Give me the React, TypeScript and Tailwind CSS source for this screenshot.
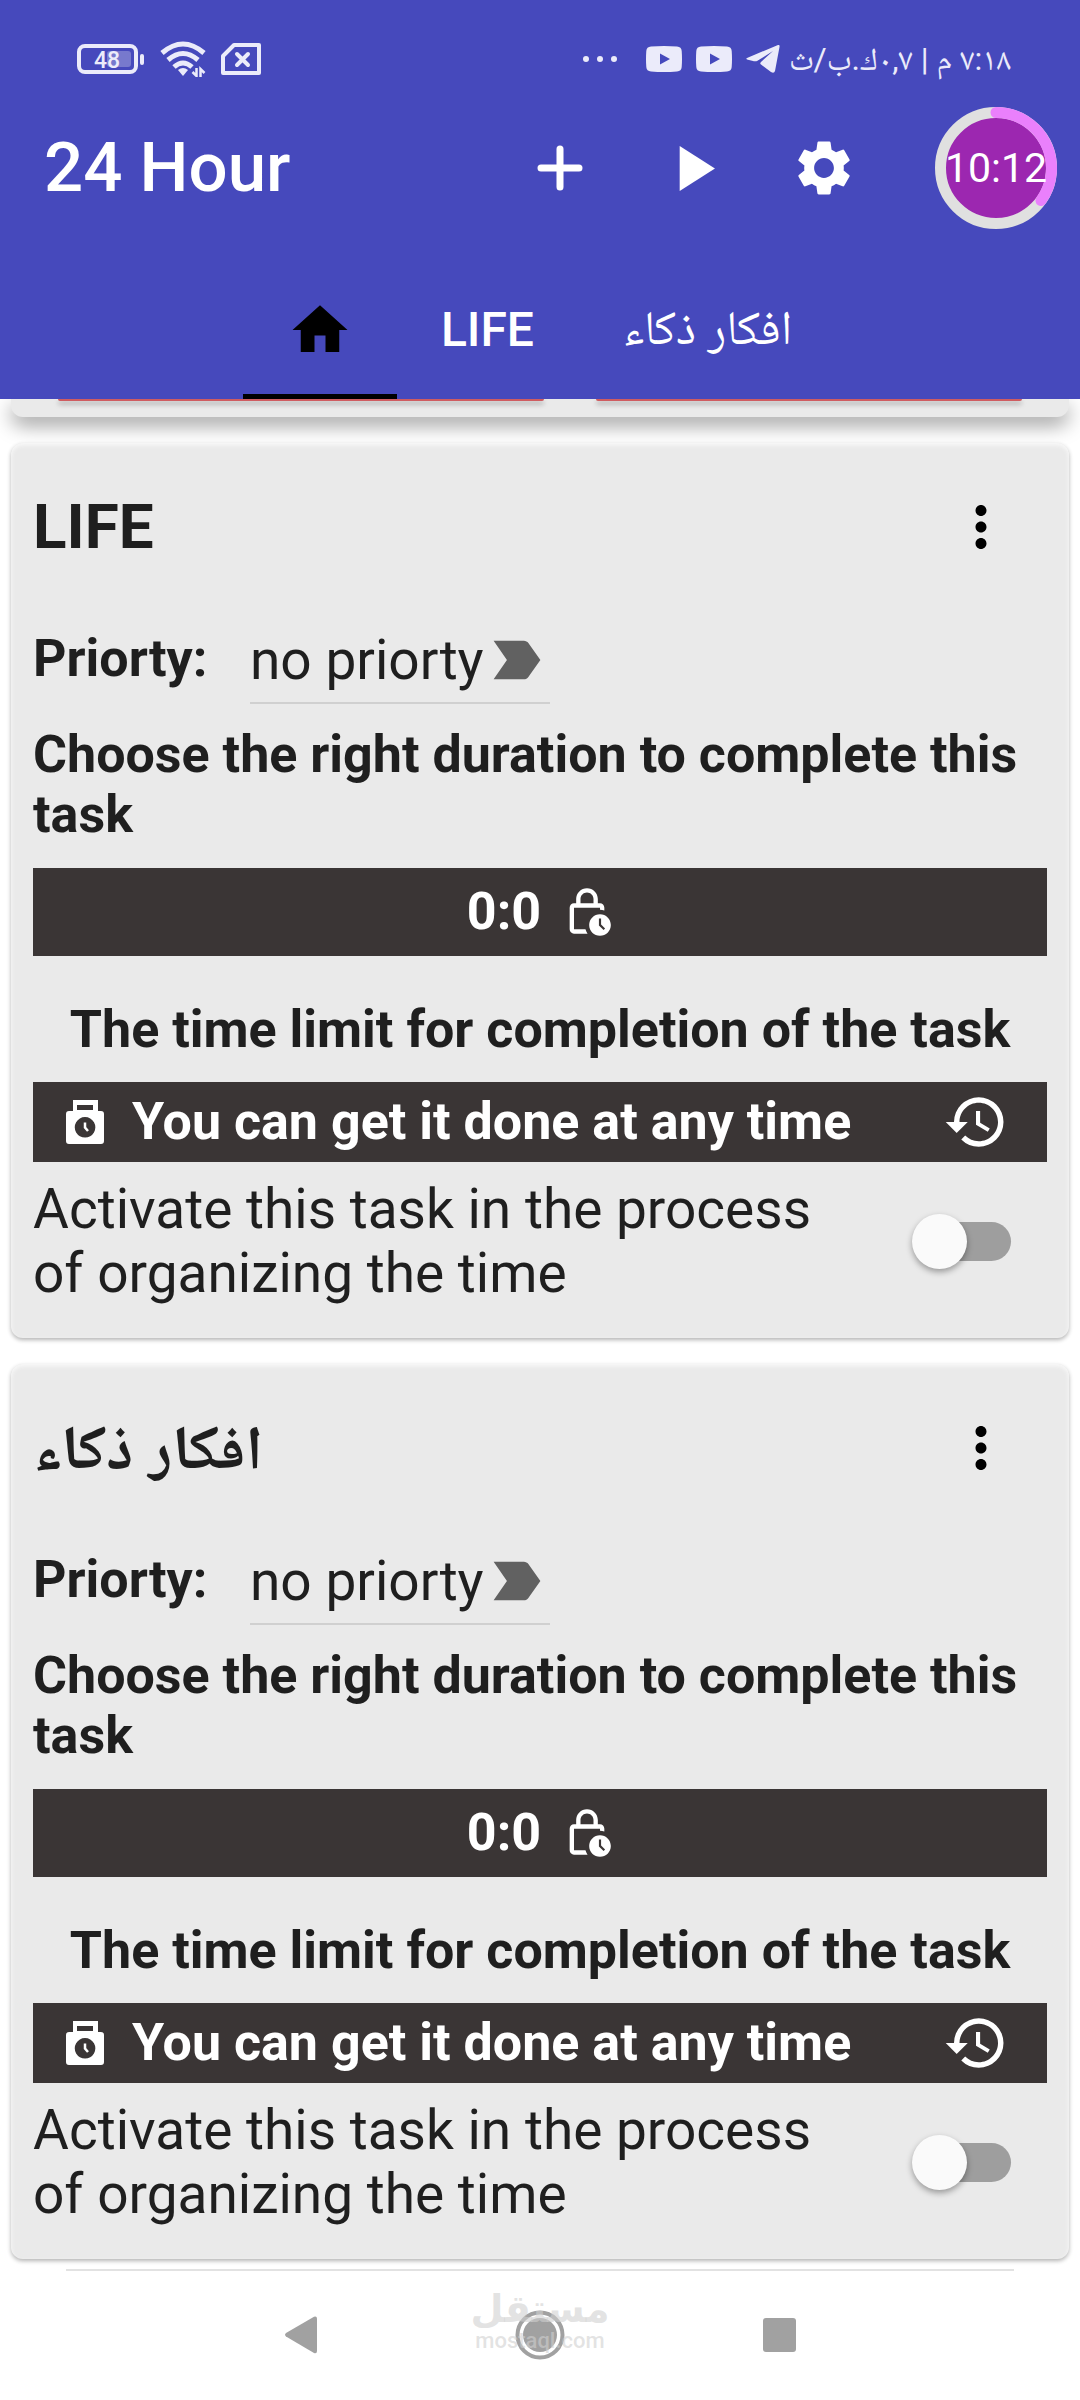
import { ReactNode, useState } from "react"
import { MdHistory, MdHome, MdLabelImportant, MdMoreVert, MdOutlineLockClock, MdPlayArrow, MdSettings } from "react-icons/md"

const tasks = [
    { id: "life", name: "LIFE" },
    { id: "ideas", name: "افكار ذكاء" },
]

export default function App() {
    return (
        <div className="flex min-h-screen w-full flex-col bg-white font-['Roboto','Noto_Naskh_Arabic','Noto_Sans_Arabic',sans-serif] text-[#1f1f1f]">
            <header className="relative z-10 bg-[#4649bc] text-white">
                <StatusBar/>
                <AppBar/>
                <TabBar/>
            </header>
            <main className="flex flex-col">
                <PreviousCard/>
                {tasks.map((task) => (
                    <TaskCard key={task.id} id={task.id} name={task.name}/>
                ))}
            </main>
            <NavigationBar/>
        </div>
    )
}

function StatusBar() {
    return (
        <div className="flex h-20 items-center justify-between pt-[38px] pr-[69px] pl-[76px] text-[#ebebfa]">
            <div className="flex items-center gap-[15px]">
                <svg className="h-[32px] w-[69px]" viewBox="0 0 69 32" fill="none">
                    <rect x="3" y="3" width="57" height="26" rx="6" stroke="currentColor" strokeWidth="4"/>
                    <rect x="31" y="8" width="24" height="16" rx="3" fill="#7779cd"/>
                    <rect x="64" y="11" width="4" height="11" rx="2" fill="currentColor"/>
                    <text x="31" y="25" fontSize="23" fontWeight="500" textAnchor="middle" fill="currentColor">48</text>
                </svg>
                <svg className="h-[36px] w-[46px]" viewBox="0 0 46 36" fill="none" stroke="currentColor" strokeWidth="5">
                    <path d="M2 12Q23 -6 44 12"/>
                    <path d="M8 19Q23 6 38 19"/>
                    <path d="M14 26Q23 18 32 26"/>
                    <path d="M18 29Q23 25 28 29L23 35Z" fill="currentColor" stroke="none"/>
                    <path d="M36.500 27v8l-4-4M40.500 36v-8l4 4" strokeWidth="2.500"/>
                </svg>
                <svg className="h-[32px] w-[40px]" viewBox="0 0 40 32" fill="none" stroke="currentColor" strokeWidth="4" strokeLinejoin="round">
                    <path d="M13 2H38V30H2V13Z"/>
                    <path d="M16 11l11 11M27 11l-11 11" strokeLinecap="round"/>
                </svg>
            </div>
            <div className="flex items-center">
                <svg className="mr-7 h-[8px] w-[36px]" viewBox="0 0 36 8" fill="currentColor">
                    <circle cx="4" cy="4" r="3"/>
                    <circle cx="18" cy="4" r="3"/>
                    <circle cx="32" cy="4" r="3"/>
                </svg>
                <VideoIcon/>
                <VideoIcon/>
                <svg className="mr-[9px] h-[30px] w-[34px]" viewBox="0 0 34 30" fill="currentColor">
                    <path d="M1 14L32 1q2-.5 1.500 2L29 27q-1 3-4 1l-10-7.500q-1.500-1 0-2.500L27 7 11 17q-1 .6-3 .2L1 15.500q-1.500-.7 0-1.500Z"/>
                </svg>
                <span dir="rtl" className="text-[32px] leading-10 whitespace-nowrap">٧:١٨ م | ٠,٧ك.ب/ث</span>
            </div>
        </div>
    )
}

function VideoIcon() {
    return (
        <svg className="mr-[14px] h-[26px] w-[36px]" viewBox="0 0 36 26">
            <path fill="currentColor" fillRule="evenodd" d="M5 .5Q18-.5 31 .5q4.500.3 4.700 4.500.6 8 0 16-.2 4.200-4.700 4.500-13 1-26 0Q.5 25.200.3 21q-.6-8 0-16Q.5.800 5 .5ZM14 7.500v11l10-5.500Z"/>
        </svg>
    )
}

function AppBar() {
    return (
        <div className="flex items-center pt-[27px] pr-[23px] pl-11">
            <h1 className="flex-1 text-[69px] leading-20 font-medium">24 Hour</h1>
            <IconButton label="Add task">
                <svg className="size-[66px]" viewBox="0 0 66 66" stroke="currentColor" strokeWidth="7" strokeLinecap="round">
                    <path d="M33 14V52M14 33H52"/>
                </svg>
            </IconButton>
            <IconButton label="Start"><MdPlayArrow className="size-[77px]"/></IconButton>
            <IconButton label="Settings"><MdSettings className="size-[66px]"/></IconButton>
            <div className="relative ml-[45px] flex size-[122px] items-center justify-center">
                <svg className="absolute inset-0" viewBox="0 0 122 122" fill="none" strokeWidth="11">
                    <circle cx="61" cy="61" r="55.500" fill="#9c27b0" stroke="#e0e0e0"/>
                    <path d="M61 5.500A55.500 55.500 0 0 1 106 93.500" stroke="#ea80fc" strokeLinecap="round"/>
                </svg>
                <span className="relative text-[41px] leading-12">10:12</span>
            </div>
        </div>
    )
}

function IconButton({label, children} : {label: string, children: ReactNode}) {
    return (
        <button aria-label={label} className="flex w-[132px] items-center justify-center">
            {children}
        </button>
    )
}

function TabBar() {
    return (
        <nav className="mt-8 flex justify-center text-[48px] leading-[66px] font-medium">
            <button aria-label="Home" className="px-11 py-9 text-black shadow-[inset_0_-5px_0_#000]">
                <MdHome className="size-[66px]"/>
            </button>
            <button className="px-11 py-9">LIFE</button>
            <button className="px-[45px] pt-[34px] pb-[38px] font-normal">افكار ذكاء</button>
        </nav>
    )
}

// bottom edge of the card that is scrolled under the header
function PreviousCard() {
    return (
        <div className="mx-[11px] flex h-[18px] gap-[52px] rounded-b-xl bg-[#eaeaea] pr-[47px] pl-[47px] shadow-[0_8px_20px_rgba(0,0,0,0.4)]">
            <div className="h-[2px] flex-[8] rounded-b-sm bg-[#cf5c60] shadow-[0_3px_5px_rgba(0,0,0,0.4)]"/>
            <div className="h-[2px] flex-[7] rounded-b-sm bg-[#cf5c60] shadow-[0_3px_5px_rgba(0,0,0,0.4)]"/>
        </div>
    )
}

function TaskCard({id, name} : {id: string, name: string}) {
    const [active, setActive] = useState(false)
    return (
        <section className="mx-[11px] mt-[26px] flex flex-col rounded-xl bg-[#eaeaea] px-[22px] pt-[51px] pb-[33px] text-[52px] leading-[60px] font-bold shadow-[0_2px_4px_rgba(0,0,0,0.3),inset_0_2px_4px_#fafafa]">
            <div className="flex items-center justify-between pr-[33px]">
                <h2 className="text-[62px] leading-[66px]">{name}</h2>
                <button aria-label="More" className="text-black"><MdMoreVert className="size-[66px]"/></button>
            </div>
            <div className="mt-[67px] flex">
                <label htmlFor={id + "-priority"} className="w-[217px] leading-[64px]">Priorty:</label>
                <div className="flex border-b-2 border-[#d0d0d0] pb-[9px]">
                    <select id={id + "-priority"} className="w-[234px] appearance-none text-[55px] leading-[66px] font-normal">
                        <option>no priorty</option>
                    </select>
                    <MdLabelImportant className="size-[66px] text-[#616161]"/>
                </div>
            </div>
            <p className="mt-[21px]">Choose the right duration to complete this task</p>
            <button className="mt-[23px] flex h-[88px] items-center justify-center gap-5 bg-[#3a3535] text-white">
                0:0
                <MdOutlineLockClock className="size-[52px]"/>
            </button>
            <p className="mt-11 text-center">The time limit for completion of the task</p>
            <button className="mt-[22px] flex h-20 items-center bg-[#3a3535] pr-[38px] pl-[33px] text-white">
                <LockIcon/>
                <span className="ml-7 flex-1 text-left">You can get it done at any time</span>
                <MdHistory className="size-[66px]"/>
            </button>
            <div className="mt-[15px] flex items-center gap-20 pr-9">
                <label htmlFor={id + "-active"} className="flex-1 text-[55px] leading-[64px] font-normal">
                    Activate this task in the process of organizing the time
                </label>
                <input
                    id={id + "-active"}
                    type="checkbox"
                    checked={active}
                    onChange={(e) => setActive(e.target.checked)}
                    className="relative h-[39px] w-[93px] appearance-none rounded-full bg-[#9e9e9e] before:absolute before:-top-2 before:-left-[6px] before:size-[55px] before:rounded-full before:bg-[#fafafa] before:shadow-[0_3px_6px_rgba(0,0,0,0.35)] checked:before:left-11"
                />
            </div>
        </section>
    )
}

function LockIcon() {
    return (
        <svg className="h-[44px] w-[38px]" viewBox="0 0 38 44">
            <path fill="currentColor" fillRule="evenodd" d="M7 0H32V11H35a3 3 0 0 1 3 3V41a3 3 0 0 1-3 3H3a3 3 0 0 1-3-3V14a3 3 0 0 1 3-3H7ZM11 5V10H27V5ZM19 17a10.300 10.300 0 1 0 .1 0Z"/>
            <path d="M19 22.500V27.500L22 31" fill="none" stroke="currentColor" strokeWidth="2.500"/>
        </svg>
    )
}

function NavigationBar() {
    return (
        <footer className="mx-[66px] mt-[10px] flex items-center justify-center border-t-2 border-[#e2e2e2] pt-[39px] pb-10 text-[#a1a1a1]">
            <button aria-label="Back" className="flex w-[238px] justify-start">
                <svg className="h-[38px] w-[34px]" viewBox="0 0 34 38" fill="currentColor">
                    <path d="M2 17L30 .8q3-1 3 2V35q0 3-3 2L2 20.500q-2-1.700 0-3.500Z"/>
                </svg>
            </button>
            <div className="relative flex w-[36px] justify-center">
                <button aria-label="Home">
                    <svg className="size-[50px] max-w-none" viewBox="0 0 50 50" fill="currentColor">
                        <circle cx="25" cy="25" r="22.500" fill="none" stroke="currentColor" strokeWidth="4"/>
                        <circle cx="25" cy="25" r="17"/>
                    </svg>
                </button>
                <div className="absolute bottom-[7px] flex flex-col items-center text-[#d0d0d0]/60">
                    <span className="font-['DejaVu_Sans',sans-serif] text-[38px] leading-10 font-bold">مستقل</span>
                    <span className="text-[22px] leading-6 font-medium">mostaql.com</span>
                </div>
            </div>
            <button aria-label="Recent apps" className="flex w-[238px] justify-end">
                <svg className="h-[34px] w-[33px]" viewBox="0 0 33 34" fill="currentColor">
                    <rect width="33" height="34" rx="3"/>
                </svg>
            </button>
        </footer>
    )
}
